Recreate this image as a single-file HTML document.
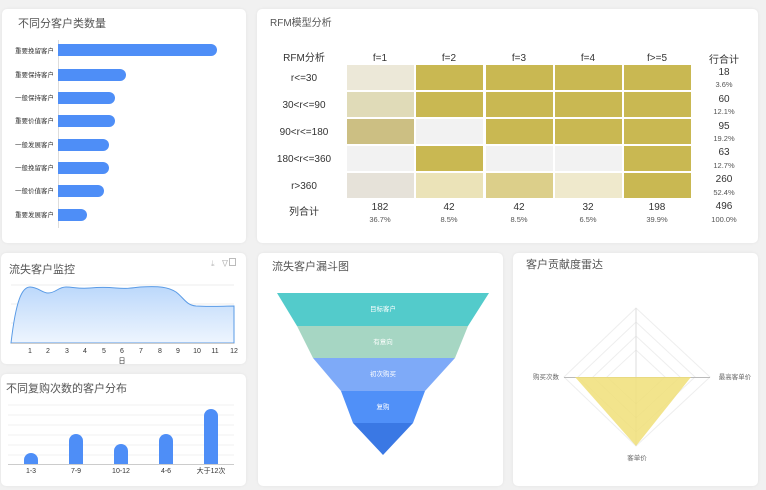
<!DOCTYPE html>
<html><head><meta charset="utf-8"><style>
*{margin:0;padding:0;box-sizing:border-box}
body{width:766px;height:490px;background:#f1f1f1;position:relative;overflow:hidden;font-family:"Liberation Sans","Noto Sans CJK SC",sans-serif;color:#333}
.card{position:absolute;background:#fff;border-radius:5px;box-shadow:0 0 3px rgba(0,0,0,.06)}
.t{position:absolute;font-size:11px;color:#555;white-space:nowrap}
svg{position:absolute;left:0;top:0}
</style></head><body>
<div class="card" style="left:2px;top:9px;width:244px;height:234px"></div>
<div class="card" style="left:257px;top:9px;width:501px;height:234px"></div>
<div class="card" style="left:1px;top:253px;width:245px;height:111px"></div>
<div class="card" style="left:1px;top:374px;width:245px;height:112px"></div>
<div class="card" style="left:258px;top:253px;width:245px;height:233px"></div>
<div class="card" style="left:513px;top:253px;width:245px;height:233px"></div>

<div class="t" style="left:18px;top:15px">不同分客户类数量</div>
<div class="t" style="left:270px;top:14px;font-size:10px">RFM模型分析</div>
<div class="t" style="left:9px;top:261px">流失客户监控</div>
<div class="t" style="left:6px;top:380px">不同复购次数的客户分布</div>
<div class="t" style="left:272px;top:258px">流失客户漏斗图</div>
<div class="t" style="left:526px;top:256px">客户贡献度雷达</div>

<svg width="766" height="490" font-family="Liberation Sans, Noto Sans CJK SC, sans-serif">
<!-- bar chart 1 -->
<line x1="58.5" y1="40" x2="58.5" y2="228" stroke="#ddd"/>
<g fill="#4e8ef7">
<rect x="58" y="44" width="159" height="12" rx="6"/><rect x="58" y="44" width="8" height="12"/>
<rect x="58" y="69" width="68" height="12" rx="6"/><rect x="58" y="69" width="8" height="12"/>
<rect x="58" y="92" width="57" height="12" rx="6"/><rect x="58" y="92" width="8" height="12"/>
<rect x="58" y="115" width="57" height="12" rx="6"/><rect x="58" y="115" width="8" height="12"/>
<rect x="58" y="139" width="51" height="12" rx="6"/><rect x="58" y="139" width="8" height="12"/>
<rect x="58" y="162" width="51" height="12" rx="6"/><rect x="58" y="162" width="8" height="12"/>
<rect x="58" y="185" width="46" height="12" rx="6"/><rect x="58" y="185" width="8" height="12"/>
<rect x="58" y="209" width="29" height="12" rx="6"/><rect x="58" y="209" width="8" height="12"/>
</g>
<g font-size="6.5" fill="#333" text-anchor="end">
<text x="54" y="53">重要挽留客户</text><text x="54" y="77">重要保持客户</text><text x="54" y="100">一般保持客户</text><text x="54" y="123">重要价值客户</text><text x="54" y="147">一般发展客户</text><text x="54" y="170">一般挽留客户</text><text x="54" y="193">一般价值客户</text><text x="54" y="217">重要发展客户</text>
</g>

<!-- RFM table -->
<g font-size="10" fill="#333" text-anchor="middle">
<text x="304" y="61">RFM分析</text>
<text x="380" y="61">f=1</text><text x="449" y="61">f=2</text><text x="519" y="61">f=3</text><text x="588" y="61">f=4</text><text x="657" y="61">f&gt;=5</text>
<text x="724" y="63">行合计</text>
<text x="304" y="81">r&lt;=30</text><text x="304" y="108">30&lt;r&lt;=90</text><text x="304" y="135">90&lt;r&lt;=180</text><text x="304" y="162">180&lt;r&lt;=360</text><text x="304" y="189">r&gt;360</text>
<text x="304" y="215">列合计</text>
<text x="724" y="75">18</text><text x="724" y="102">60</text><text x="724" y="129">95</text><text x="724" y="155">63</text><text x="724" y="182">260</text><text x="724" y="209">496</text>
<text x="380" y="210">182</text><text x="449" y="210">42</text><text x="519" y="210">42</text><text x="588" y="210">32</text><text x="657" y="210">198</text>
</g>
<g font-size="7.5" fill="#555" text-anchor="middle">
<text x="724" y="87">3.6%</text><text x="724" y="114">12.1%</text><text x="724" y="141">19.2%</text><text x="724" y="168">12.7%</text><text x="724" y="195">52.4%</text><text x="724" y="222">100.0%</text>
<text x="380" y="222">36.7%</text><text x="449" y="222">8.5%</text><text x="519" y="222">8.5%</text><text x="588" y="222">6.5%</text><text x="657" y="222">39.9%</text>
</g>
<g>
<rect x="347" y="65" width="67" height="25" fill="#ece8d8"/><rect x="416" y="65" width="67" height="25" fill="#c9b852"/><rect x="486" y="65" width="67" height="25" fill="#c9b852"/><rect x="555" y="65" width="67" height="25" fill="#c9b852"/><rect x="624" y="65" width="67" height="25" fill="#c9b852"/>
<rect x="347" y="92" width="67" height="25" fill="#e0dbb8"/><rect x="416" y="92" width="67" height="25" fill="#c9b852"/><rect x="486" y="92" width="67" height="25" fill="#c9b852"/><rect x="555" y="92" width="67" height="25" fill="#c9b852"/><rect x="624" y="92" width="67" height="25" fill="#c9b852"/>
<rect x="347" y="119" width="67" height="25" fill="#ccbf83"/><rect x="416" y="119" width="67" height="25" fill="#f2f2f2"/><rect x="486" y="119" width="67" height="25" fill="#c9b852"/><rect x="555" y="119" width="67" height="25" fill="#c9b852"/><rect x="624" y="119" width="67" height="25" fill="#c9b852"/>
<rect x="347" y="146" width="67" height="25" fill="#f2f2f2"/><rect x="416" y="146" width="67" height="25" fill="#c9b852"/><rect x="486" y="146" width="67" height="25" fill="#f2f2f2"/><rect x="555" y="146" width="67" height="25" fill="#f2f2f2"/><rect x="624" y="146" width="67" height="25" fill="#c9b852"/>
<rect x="347" y="173" width="67" height="25" fill="#e6e2d9"/><rect x="416" y="173" width="67" height="25" fill="#ebe3b8"/><rect x="486" y="173" width="67" height="25" fill="#dccf8a"/><rect x="555" y="173" width="67" height="25" fill="#efe9cc"/><rect x="624" y="173" width="67" height="25" fill="#c9b852"/>
</g>

<!-- line chart -->
<defs><linearGradient id="g" x1="0" y1="0" x2="0" y2="1"><stop offset="0" stop-color="#bcd8fb"/><stop offset="1" stop-color="#eef5fe"/></linearGradient></defs>
<g stroke="#eee"><line x1="11" y1="285" x2="234" y2="285"/><line x1="11" y1="304" x2="234" y2="304"/><line x1="11" y1="323" x2="234" y2="323"/></g>
<path d="M11,343 C16,300 22,287 30,287 C38,287 42,293 48,293 C56,293 58,287 66,287 C74,287 78,289 90,288 C100,287 106,287 116,288 C126,289 132,288 140,287 C160,286 168,287 176,292 C184,298 186,305 196,306 C210,307 224,306 234,306 L234,343 Z" fill="url(#g)" stroke="#5a9be6" stroke-width="1"/>
<line x1="11" y1="343.5" x2="234" y2="343.5" stroke="#ccc"/>
<g font-size="7" fill="#333" text-anchor="middle">
<text x="30" y="353">1</text><text x="48" y="353">2</text><text x="67" y="353">3</text><text x="85" y="353">4</text><text x="104" y="353">5</text><text x="122" y="353">6</text><text x="141" y="353">7</text><text x="160" y="353">8</text><text x="178" y="353">9</text><text x="197" y="353">10</text><text x="215" y="353">11</text><text x="234" y="353">12</text>
<text x="122" y="363">日</text>
</g>
<g fill="#bbb" font-size="8"><text x="211" y="266">⤓</text><text x="221" y="266">∇</text><rect x="229.5" y="258.5" width="6" height="7" fill="none" stroke="#bbb"/></g>

<!-- bar chart 2 -->
<g stroke="#f0f0f0"><line x1="8" y1="405" x2="234" y2="405"/><line x1="8" y1="415" x2="234" y2="415"/><line x1="8" y1="425" x2="234" y2="425"/><line x1="8" y1="435" x2="234" y2="435"/><line x1="8" y1="445" x2="234" y2="445"/><line x1="8" y1="455" x2="234" y2="455"/></g>
<g fill="#4e8ef7">
<path d="M24,464 V460 a7,7 0 0 1 14,0 V464Z"/>
<path d="M69,464 V441 a7,7 0 0 1 14,0 V464Z"/>
<path d="M114,464 V451 a7,7 0 0 1 14,0 V464Z"/>
<path d="M159,464 V441 a7,7 0 0 1 14,0 V464Z"/>
<path d="M204,464 V416 a7,7 0 0 1 14,0 V464Z"/>
</g>
<line x1="8" y1="464.5" x2="234" y2="464.5" stroke="#ccc"/>
<g font-size="7" fill="#333" text-anchor="middle"><text x="31" y="473">1-3</text><text x="76" y="473">7-9</text><text x="121" y="473">10-12</text><text x="166" y="473">4-6</text><text x="211" y="473">大于12次</text></g>

<!-- funnel -->
<polygon points="277,293 489,293 468,326 297,326" fill="#53cbcb"/>
<polygon points="297,326 468,326 455,358 313,358" fill="#a6d6c3"/>
<polygon points="313,358 455,358 425,391 341,391" fill="#7eaaf8"/>
<polygon points="341,391 425,391 413,423 353,423" fill="#5090f8"/>
<polygon points="353,423 413,423 383,455" fill="#3a78e4"/>
<g font-size="6.5" fill="#fff" text-anchor="middle"><text x="383" y="311">目标客户</text><text x="383" y="344">有意向</text><text x="383" y="376">初次购买</text><text x="383" y="409">复购</text></g>

<!-- radar -->
<g stroke="#eee" fill="none">
<polygon points="636,308 710,377 636,446 564,377"/>
<polygon points="636,322 695,377 636,432 578,377"/>
<polygon points="636,336 680,377 636,418 593,377"/>
<polygon points="636,350 665,377 636,404 607,377"/>
</g>
<line x1="636" y1="308" x2="636" y2="446" stroke="#ddd"/>
<line x1="564" y1="377.5" x2="710" y2="377.5" stroke="#bbb"/>
<polygon points="575,377 691,377 636,446" fill="#f0df78" fill-opacity=".85"/>
<g font-size="6.5" fill="#666" text-anchor="middle"><text x="546" y="379">购买次数</text><text x="735" y="379">最高客单价</text><text x="637" y="460">客单价</text></g>
</svg>
</body></html>
